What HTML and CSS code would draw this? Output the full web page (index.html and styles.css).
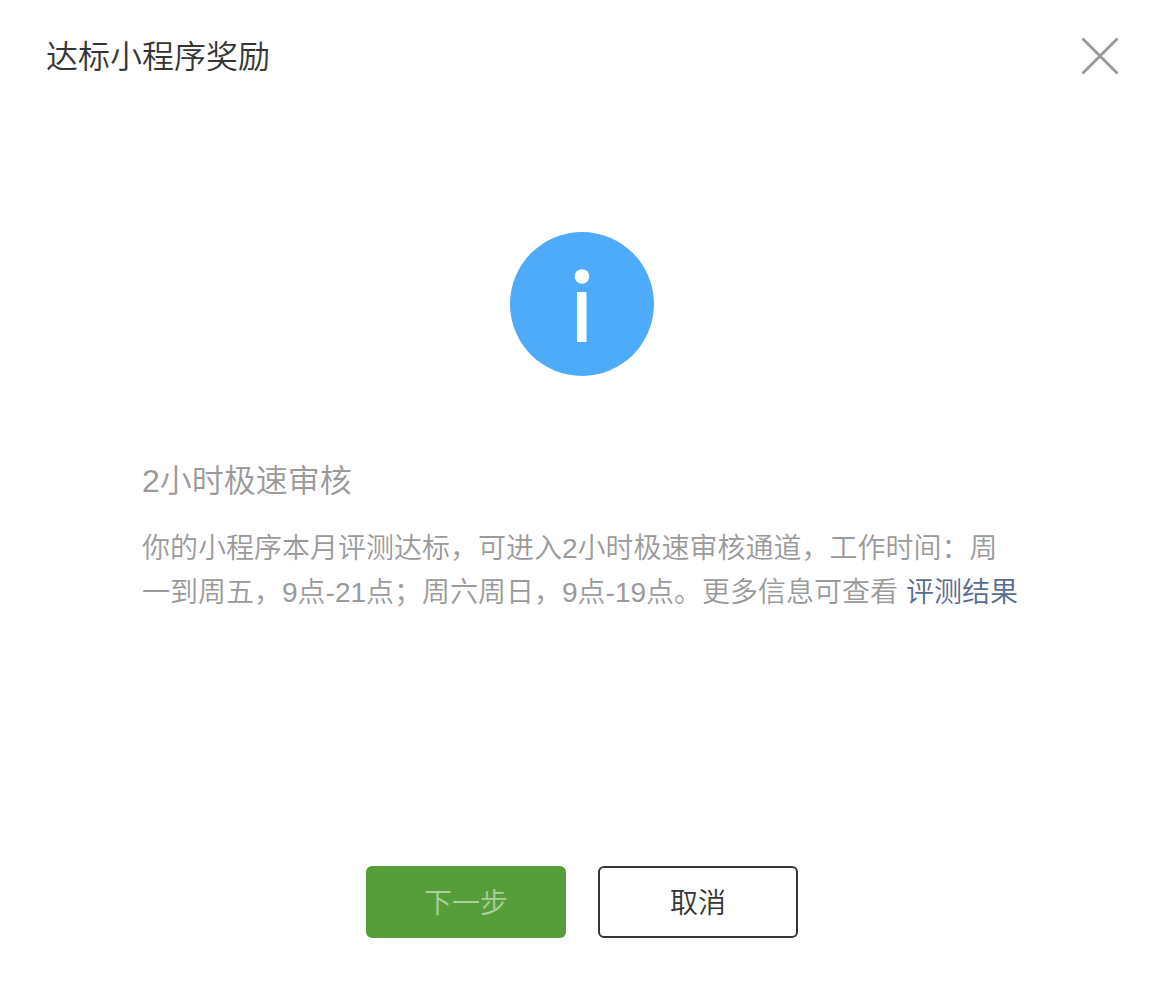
FILE: index.html
```html
<!DOCTYPE html>
<html lang="zh-CN">
<head>
<meta charset="utf-8">
<title>达标小程序奖励</title>
<link rel="stylesheet" href="styles.css">
</head>
<body>
<section class="dialog" role="dialog" aria-labelledby="dialog-title">
  <header class="dialog-header">
    <h1 class="dialog-title" id="dialog-title">达标小程序奖励</h1>
    <button class="close" type="button" aria-label="关闭">
      <svg width="40" height="40" viewBox="0 0 40 40" aria-hidden="true"><path d="M2.5 2.5 37.500 37.500M37.500 2.500 2.500 37.500" fill="none" stroke="#9a9a9a" stroke-width="3"/></svg>
    </button>
  </header>
  <main class="dialog-body">
    <svg class="info-icon" width="144" height="144" viewBox="0 0 144 144" aria-hidden="true">
      <circle cx="72" cy="72" r="72" fill="#4dabfa"/>
      <circle cx="72" cy="44.500" r="7.300" fill="#fff"/>
      <path d="M67 60h9.500v50H67z" fill="#fff"/>
    </svg>
    <div class="message">
      <h2 class="message-title">2小时极速审核</h2>
      <p class="message-text">你的小程序本月评测达标，可进入2小时极速审核通道，工作时间：周一到周五，9点-21点；周六周日，9点-19点。更多信息可查看 <a class="link" href="#result">评测结果</a></p>
    </div>
  </main>
  <footer class="dialog-footer">
    <button class="button button-primary" type="button" disabled>下一步</button>
    <button class="button" type="button">取消</button>
  </footer>
</section>
</body>
</html>
```
FILE: styles.css
```css
* {
  box-sizing: border-box;
}

body {
  margin: 0;
  background: #fff;
  color: #353535;
  font-family: "Liberation Sans", "Noto Sans CJK SC", sans-serif;
  font-weight: 350;
}

.dialog {
  display: flex;
  flex-direction: column;
  min-height: 100vh;
}

.dialog-header {
  display: flex;
  align-items: center;
  justify-content: space-between;
  padding: 32px 46px;
}

.dialog-title {
  margin: 0;
  padding-top: 2px;
  font-size: 32px;
  line-height: 46px;
  font-weight: 350;
}

.close {
  display: flex;
  padding: 0;
  border: 0;
  background: none;
  cursor: pointer;
}

.dialog-body {
  flex: 1;
  display: flex;
  flex-direction: column;
  align-items: center;
  padding: 120px 144px 0 142px;
}

.info-icon {
  display: block;
}

.message {
  width: 100%;
  padding-top: 81px;
  color: #9a9a9a;
}

.message-title {
  margin: 0 0 22px;
  font-size: 32px;
  line-height: 48px;
  font-weight: 350;
}

.message-text {
  margin: 0;
  font-size: 28px;
  line-height: 44px;
}

.link {
  color: #576b95;
  text-decoration: none;
}

.dialog-footer {
  display: flex;
  justify-content: center;
  gap: 32px;
  padding: 0 2px 48px 0;
}

.button {
  width: 200px;
  height: 72px;
  padding: 4px 0 0;
  border: 2px solid #353535;
  border-radius: 6px;
  background: #fff;
  color: #353535;
  font: inherit;
  font-size: 28px;
  line-height: 44px;
}

.button-primary {
  border-color: #569e3a;
  background: #569e3a;
  color: #abcf9d;
}
```
